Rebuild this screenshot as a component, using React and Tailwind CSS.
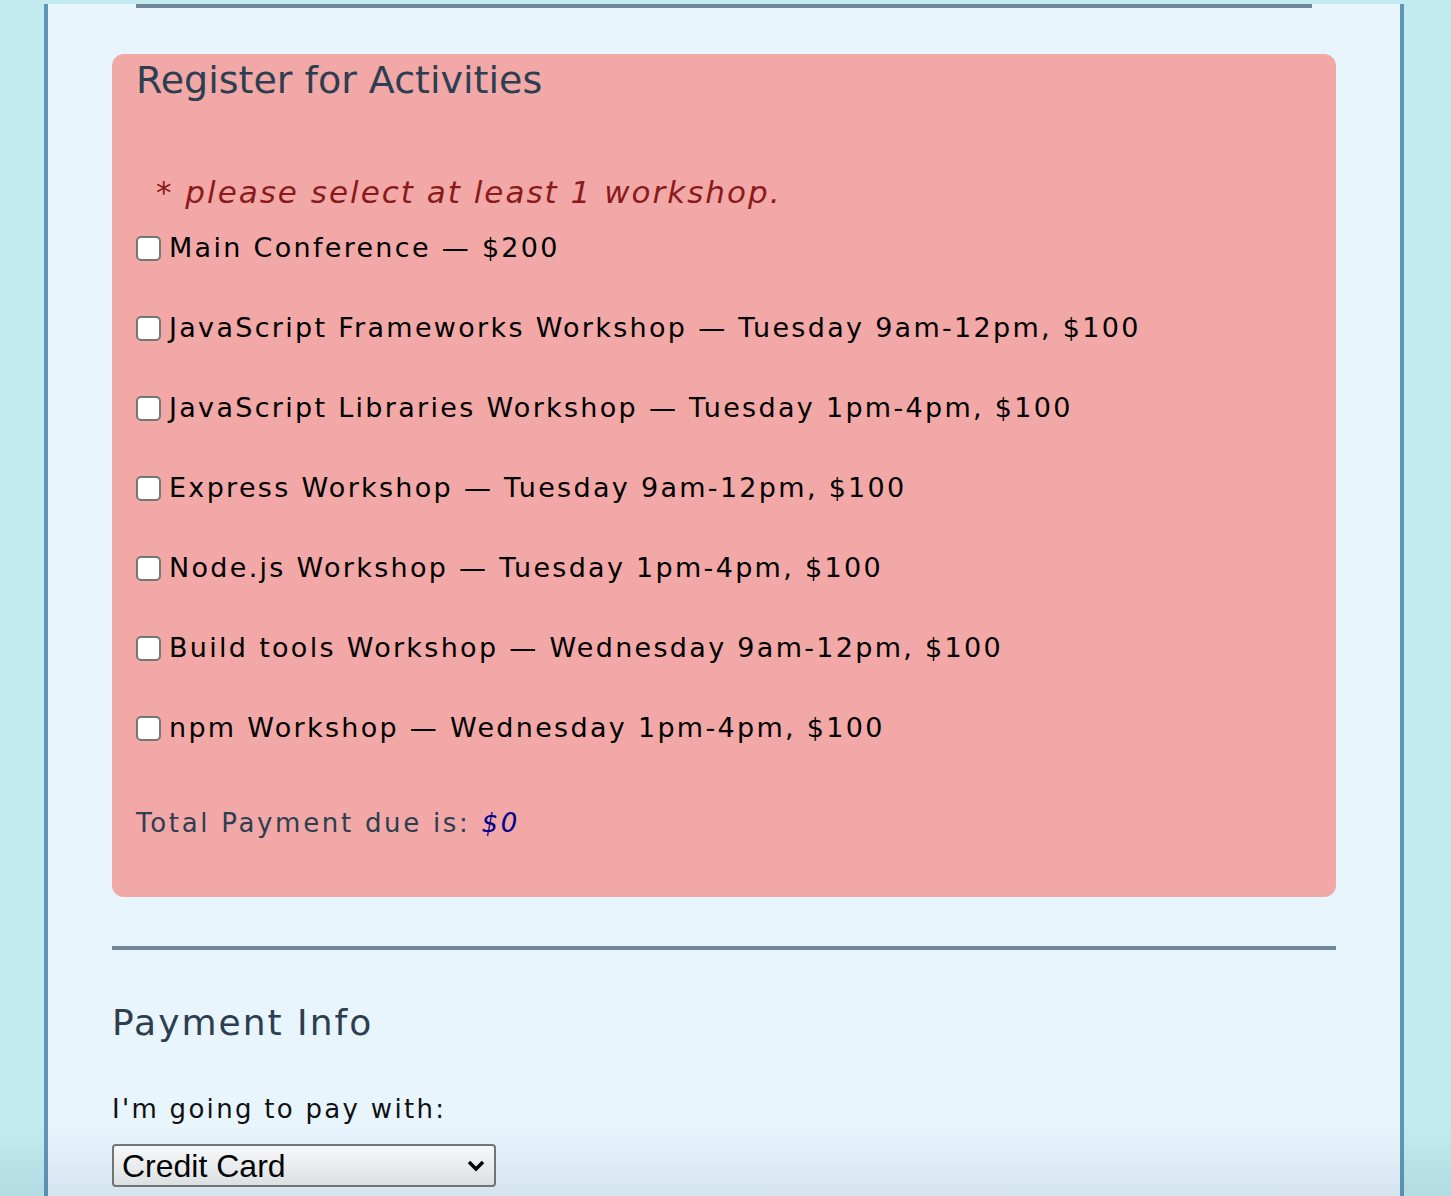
import React from "react";

const items = [
  "Main Conference — $200",
  "JavaScript Frameworks Workshop — Tuesday 9am-12pm, $100",
  "JavaScript Libraries Workshop — Tuesday 1pm-4pm, $100",
  "Express Workshop — Tuesday 9am-12pm, $100",
  "Node.js Workshop — Tuesday 1pm-4pm, $100",
  "Build tools Workshop — Wednesday 9am-12pm, $100",
  "npm Workshop — Wednesday 1pm-4pm, $100",
];

export default function App() {
  return (
    <div className="relative h-[1196px] overflow-hidden bg-[#c2ebef] pl-[44px] pr-[47px] [font-family:'DejaVu_Sans',sans-serif]">
      <div className="h-full border-x-4 border-[#5f96b8] bg-[#e8f5fd] px-16">
        <div className="mx-6 mt-1 h-1 bg-[#6e8899]" />
        <div className="mt-[46px] h-[843px] rounded-xl bg-[#f1a8a7] px-6">
          <h2 className="text-[38px] leading-[52px] text-[#2c3e50]">Register for Activities</h2>
          <p className="mt-[64px] pl-5 text-[31px] italic leading-[44px] tracking-[2px] text-[#8b1a1a]">* please select at least 1 workshop.</p>
          <div className="mt-[16px] flex flex-col gap-[44px]">
            {items.map((t) => (
              <label key={t} className="flex h-[36px] items-center text-[27px] leading-[36px] tracking-[2.3px] text-black">
                <span className="mr-[8px] inline-block h-[25px] w-[25px] shrink-0 rounded-[5px] border-2 border-[#767676] bg-white" />
                {t}
              </label>
            ))}
          </div>
          <p className="mt-[57px] text-[26px] leading-[40px] tracking-[2.7px] text-[#2c3e50]">
            Total Payment due is: <span className="italic text-[#00008b]">$0</span>
          </p>
        </div>
        <div className="mt-[49px] h-1 bg-[#6e8899]" />
        <h2 className="mt-[48px] text-[36px] leading-[50px] tracking-[2px] text-[#2c3e50]">Payment Info</h2>
        <p className="mt-[41px] text-[26px] leading-[40px] tracking-[2.3px] text-[#111]">I'm going to pay with:</p>
        <div className="mt-[15px] flex h-[43px] w-[384px] items-center justify-between rounded-[4px] border-2 border-[#767676] bg-[linear-gradient(#fdfdfd,#eeeeee)] pl-[8px] pr-[8px] text-[32px] text-black [font-family:'Liberation_Sans',sans-serif]">
          <span>Credit Card</span>
          <svg width="20" height="14" viewBox="0 0 20 14"><path d="M3 3l7 7 7-7" fill="none" stroke="black" strokeWidth="3.5" /></svg>
        </div>
      </div>
      <div className="pointer-events-none absolute inset-x-0 bottom-0 h-[70px] bg-[linear-gradient(to_bottom,rgba(40,80,110,0),rgba(40,80,110,0.1))]" />
    </div>
  );
}
